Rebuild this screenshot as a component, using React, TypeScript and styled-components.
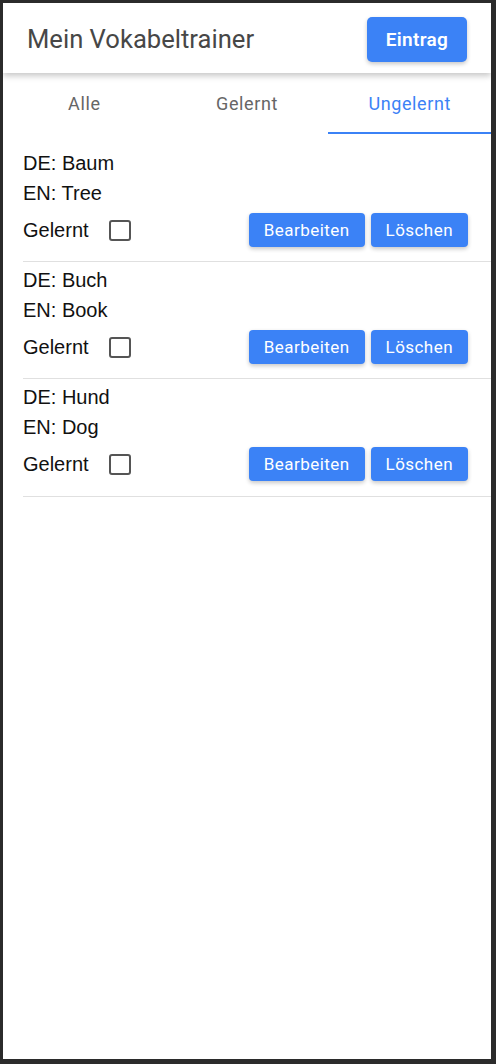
import React, { useState } from "react";
import styled, { createGlobalStyle } from "styled-components";

const GlobalStyle = createGlobalStyle`
  html, body { margin: 0; padding: 0; }
  body {
    background: #2b2b2b;
    padding: 3px 5px 5px 3px;
    font-family: "Liberation Sans", Arial, sans-serif;
  }
  * { box-sizing: border-box; }
`;

const Screen = styled.div`
  background: #ffffff;
  height: 1056px;
  display: flex;
  flex-direction: column;
  overflow: hidden;
`;

const Header = styled.header`
  position: relative;
  z-index: 2;
  height: 70px;
  flex: 0 0 70px;
  display: flex;
  align-items: center;
  justify-content: space-between;
  padding: 2px 24px 0 24px;
  background: #fff;
  box-shadow: 0 3px 6px rgba(0, 0, 0, 0.22);
`;

const Title = styled.h1`
  margin: 0;
  font-family: Roboto, "Liberation Sans", Arial, sans-serif;
  font-weight: 400;
  font-size: 25.6px;
  color: #474747;
`;

const PrimaryButton = styled.button`
  border: none;
  border-radius: 5px;
  background: #3b82f6;
  color: #fff;
  font-family: Roboto, "Liberation Sans", Arial, sans-serif;
  font-weight: 600;
  font-size: 19px;
  letter-spacing: 0.3px;
  height: 45px;
  width: 100px;
  padding: 0;
  box-shadow: 0 2px 4px rgba(0, 0, 0, 0.22);
  cursor: pointer;
`;

const TabBar = styled.nav`
  display: grid;
  grid-template-columns: repeat(3, 1fr);
  height: 61px;
  flex: 0 0 61px;
`;

const Tab = styled.button<{ $active: boolean }>`
  border: none;
  background: transparent;
  font-family: Roboto, "Liberation Sans", Arial, sans-serif;
  font-size: 18px;
  letter-spacing: 0.6px;
  color: ${(p) => (p.$active ? "#3b82f6" : "#666")};
  border-bottom: 2px solid ${(p) => (p.$active ? "#3b82f6" : "transparent")};
  padding: 2px 0 0 0;
  cursor: pointer;
`;

const List = styled.ul`
  list-style: none;
  margin: 0;
  padding: 11px 0 0 0;
`;

const Item = styled.li`
  margin-left: 20px;
  padding: 3px 23px 14px 0;
  border-bottom: 1px solid #e0e0e0;
  &:last-child { padding-bottom: 15px; }
`;

const Line = styled.div`
  font-size: 20px;
  line-height: 30px;
  color: #111;
`;

const ActionRow = styled.div`
  margin-top: 5px;
  height: 34px;
  display: flex;
  align-items: center;
`;

const CheckLabel = styled.label`
  display: flex;
  align-items: center;
  font-size: 20px;
  color: #111;
  flex: 1;
`;

const Box = styled.span<{ $checked: boolean }>`
  margin-left: 20px;
  width: 22px;
  height: 21px;
  border: 2px solid #555;
  border-radius: 3px;
  background: ${(p) => (p.$checked ? "#3b82f6" : "#fff")};
  display: inline-block;
`;

const HiddenInput = styled.input`
  display: none;
`;

const SmallButton = styled.button`
  border: none;
  border-radius: 4px;
  background: #3b82f6;
  color: #fff;
  font-family: Roboto, "Liberation Sans", Arial, sans-serif;
  font-size: 17px;
  letter-spacing: 0.45px;
  height: 34px;
  padding: 0 15px;
  box-shadow: 0 2px 4px rgba(0, 0, 0, 0.22);
  cursor: pointer;
  & + & { margin-left: 6px; }
`;

type Word = { de: string; en: string; learned: boolean };

const initial: Word[] = [
  { de: "Baum", en: "Tree", learned: false },
  { de: "Buch", en: "Book", learned: false },
  { de: "Hund", en: "Dog", learned: false },
];

export default function App() {
  const [tab, setTab] = useState(2);
  const [words, setWords] = useState<Word[]>(initial);
  const tabs = ["Alle", "Gelernt", "Ungelernt"];

  return (
    <>
      <GlobalStyle />
      <Screen>
        <Header>
          <Title>Mein Vokabeltrainer</Title>
          <PrimaryButton>Eintrag</PrimaryButton>
        </Header>
        <TabBar>
          {tabs.map((t, i) => (
            <Tab key={t} $active={tab === i} onClick={() => setTab(i)}>
              {t}
            </Tab>
          ))}
        </TabBar>
        <List>
          {words.map((w, i) => (
            <Item key={w.de}>
              <Line>DE: {w.de}</Line>
              <Line>EN: {w.en}</Line>
              <ActionRow>
                <CheckLabel>
                  Gelernt
                  <HiddenInput
                    type="checkbox"
                    checked={w.learned}
                    onChange={() =>
                      setWords(words.map((x, j) => (j === i ? { ...x, learned: !x.learned } : x)))
                    }
                  />
                  <Box $checked={w.learned} />
                </CheckLabel>
                <SmallButton>Bearbeiten</SmallButton>
                <SmallButton>Löschen</SmallButton>
              </ActionRow>
            </Item>
          ))}
        </List>
      </Screen>
    </>
  );
}
